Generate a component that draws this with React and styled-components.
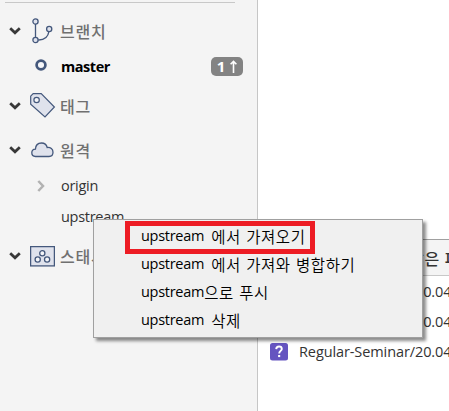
import React from "react";
import styled, { createGlobalStyle } from "styled-components";

const Global = createGlobalStyle`
  * { box-sizing: border-box; }
  body { margin: 0; overflow: hidden; background: #fff; }
`;

const Window = styled.div`
  position: relative;
  display: flex;
  width: 449px;
  height: 411px;
  overflow: hidden;
  background: #fff;
  color: #333;
  font-family: "Open Sans", "Noto Sans CJK KR", sans-serif;
  font-size: 14px;
`;

const Sidebar = styled.aside`
  flex: none;
  width: 258px;
  height: 100%;
  padding: 2px 22px 0 5px;
  background: #f4f4f4;
  border-right: 1px solid #c6c6c6;
`;

const Divider = styled.div`
  height: 1px;
  margin-bottom: 10px;
  background: #c8c8c8;
`;

const Row = styled.div`
  display: grid;
  grid-template-columns: 20px 36px 1fr auto;
  align-items: center;
  height: ${(p) => p.$height}px;
  margin-right: -8px;
  white-space: nowrap;
`;

const IconCell = styled.span`
  display: flex;
  align-items: center;
  padding-left: ${(p) => p.$indent || 0}px;
  svg { display: block; flex: none; }
`;

const En = styled.span`
  font-family: "Open Sans", sans-serif;
  font-size: ${(p) => p.$size || 14.5}px;
  font-weight: ${(p) => (p.$bold ? 700 : 400)};
  letter-spacing: ${(p) => p.$track ?? -0.28}px;
  line-height: 20px;
`;

const BranchName = styled(En)`
  color: #000;
`;

const Ko = styled.span`
  font-family: "Noto Sans CJK KR", sans-serif;
  font-size: ${(p) => p.$size || 15}px;
  font-weight: ${(p) => p.$weight || 400};
  letter-spacing: ${(p) => p.$track || 0}px;
  word-spacing: ${(p) => p.$gap || 0}px;
  line-height: 20px;
`;

const GroupTitle = styled(Ko)`
  margin-left: -1px;
  color: #707070;
  font-size: 16px;
  font-weight: 500;
  letter-spacing: 0.8px;
  line-height: 24px;
`;

const Badge = styled.span`
  display: flex;
  align-items: center;
  justify-content: center;
  gap: 5px;
  width: 32px;
  height: 19px;
  border-radius: 5px;
  background: #838383;
  color: #fff;
  font: 700 15px/19px "Open Sans", sans-serif;
`;

const Main = styled.main`
  flex: 1;
  min-width: 0;
  padding-top: 239px;
`;

const TableHead = styled.div`
  display: flex;
  justify-content: flex-start;
  align-items: center;
  height: 37px;
  padding-left: 151px;
  border-top: 1px solid #a0a0a0;
  border-bottom: 1px solid #c8c8c8;
  background: #f4f4f4;
  white-space: nowrap;
`;

const FileRow = styled.div`
  display: grid;
  grid-template-columns: 29px auto;
  align-items: center;
  height: 30px;
  padding-left: 12px;
  white-space: nowrap;
`;

const Files = styled.div`
  padding-top: 1px;
`;

const Menu = styled.div`
  position: absolute;
  left: 93px;
  top: 219px;
  width: 330px;
  height: 119px;
  padding: 2px 0 0 47px;
  border: 1px solid #a0a0a0;
  background: #f0f0f0;
  box-shadow: 3px 3px 3px rgba(0, 0, 0, 0.45);
  color: #000;
`;

const MenuItem = styled.div`
  display: flex;
  align-items: center;
  height: 28px;
  white-space: nowrap;
`;

const MenuText = styled(Ko)`
  margin-left: ${(p) => p.$lead || 0}px;
`;

const Highlight = styled.div`
  position: absolute;
  left: 125px;
  top: 221px;
  width: 190px;
  height: 33px;
  border: 5px solid #ed1c24;
`;

const ink = "#44587c";
const fill = "#dfe2ec";

const Chevron = () => (
  <svg width="12" height="8" viewBox="0 0 12 8">
    <path d="M1.200 1.300 6 5.800l4.800-4.500" fill="none" stroke="#383838" strokeWidth="2.800" />
  </svg>
);
const ChevronRight = () => (
  <svg width="8" height="12" viewBox="0 0 8 12">
    <path d="m1.300 1 4.700 5-4.700 5" fill="none" stroke="#b2b2b2" strokeWidth="2.500" />
  </svg>
);
const BranchIcon = () => (
  <svg width="21" height="26" viewBox="0 0 21 26" fill="none" stroke={ink} strokeWidth="1.300">
    <path d="M3.500 6v13M6.200 22c7 .2 10-3.500 10.800-8.800" />
    <g fill={fill}>
      <circle cx="3.500" cy="3.500" r="2.600" />
      <circle cx="3.500" cy="22" r="2.600" />
      <circle cx="17.200" cy="11" r="2.600" />
    </g>
  </svg>
);
const CurrentIcon = () => (
  <svg width="12" height="15" viewBox="0 0 12 15">
    <circle cx="6" cy="6" r="4.400" fill="#f6f7fa" stroke={ink} strokeWidth="2.700" />
  </svg>
);
const TagIcon = () => (
  <svg width="26" height="26" viewBox="0 0 26 26" stroke={ink} strokeWidth="1.200">
    <path d="M.7 3.200 3.200.7h8L24.400 14 15 24 .7 11.200z" fill={fill} />
    <circle cx="6.600" cy="7" r="2.700" fill="#f4f5f8" />
  </svg>
);
const CloudIcon = () => (
  <svg width="23" height="16" viewBox="0 0 23 16">
    <path d="M4.500 14.500C2 14.500.8 13 .8 10.800c0-2.100 1.400-3.500 3.600-3.600C4.600 3.500 7 1 10.500 1c3 0 5 1.600 5.700 4.500 3.400-.3 5.800 1.600 5.800 4.800 0 2.700-1.600 4.200-4 4.200z" fill={fill} stroke={ink} strokeWidth="1.300" />
  </svg>
);
const StashIcon = () => (
  <svg width="25" height="21" viewBox="0 0 25 21" fill={fill} stroke={ink}>
    <rect x=".6" y=".6" width="23.800" height="19.300" strokeWidth="1.300" />
    <g fill="#f4f5f8" strokeWidth="1.300">
      <circle cx="12.300" cy="7.200" r="2.600" />
      <circle cx="7.700" cy="13.500" r="2.600" />
      <circle cx="17.100" cy="13.500" r="2.600" />
    </g>
  </svg>
);
const ArrowUp = () => (
  <svg width="7" height="13" viewBox="0 0 7 13" fill="none" stroke="#fff" strokeWidth="1.600">
    <path d="M3.500 13V2M.6 4.300 3.500 1.400l2.900 2.900" />
  </svg>
);
const UnknownIcon = () => (
  <svg width="18" height="18" viewBox="0 0 18 18">
    <rect width="18" height="17.500" rx="2.500" fill="#6554c0" />
    <path d="M6.200 6.100C6.300 4.300 7.400 3.500 9 3.500c1.700 0 2.800.9 2.800 2.400 0 2-2.600 2.100-2.600 4.600" fill="none" stroke="#fff" strokeWidth="1.900" />
    <rect x="8.100" y="12" width="2.100" height="2.100" fill="#fff" />
  </svg>
);

const Group = ({ height, icon, indent, title }) => (
  <Row $height={height}>
    <IconCell $indent={4}><Chevron /></IconCell>
    <IconCell $indent={indent}>{icon}</IconCell>
    <GroupTitle>{title}</GroupTitle>
  </Row>
);

const menuItems = [
  ["에서 가져오기", 7],
  ["에서 가져와 병합하기", 7],
  ["으로 푸시", 0],
  ["삭제", 7],
];

export default function App() {
  return (
    <>
      <Global />
      <Window>
        <Sidebar>
          <Divider />
          <Group height={36} icon={<BranchIcon />} indent={7} title="브랜치" />
          <Row $height={35}>
            <span />
            <IconCell $indent={10}><CurrentIcon /></IconCell>
            <BranchName $bold $size={14.5} $track={-0.45}>master</BranchName>
            <Badge>1<ArrowUp /></Badge>
          </Row>
          <Group height={44} icon={<TagIcon />} indent={5} title="태그" />
          <Group height={44} icon={<CloudIcon />} indent={6} title="원격" />
          <Row $height={28}>
            <span />
            <IconCell $indent={12}><ChevronRight /></IconCell>
            <En>origin</En>
          </Row>
          <Row $height={34}>
            <span /><span />
            <En>upstream</En>
          </Row>
          <Group height={44} icon={<StashIcon />} indent={5} title="스태시" />
        </Sidebar>
        <Main>
          <TableHead><Ko $size={16} $track={0.9} $weight={500}>않은 파일</Ko></TableHead>
          <Files>
            {[0, 1, 2].map((i) => (
              <FileRow key={i}>
                <UnknownIcon />
                <En $track={-0.1}>Regular-Seminar/20.04</En>
              </FileRow>
            ))}
          </Files>
        </Main>
        <Menu>
          {menuItems.map(([label, lead]) => (
            <MenuItem key={label}>
              <En>upstream</En>
              <MenuText $lead={lead} $size={15.5} $track={0.6} $gap={1.2} $weight={350}>{label}</MenuText>
            </MenuItem>
          ))}
        </Menu>
        <Highlight />
      </Window>
    </>
  );
}
